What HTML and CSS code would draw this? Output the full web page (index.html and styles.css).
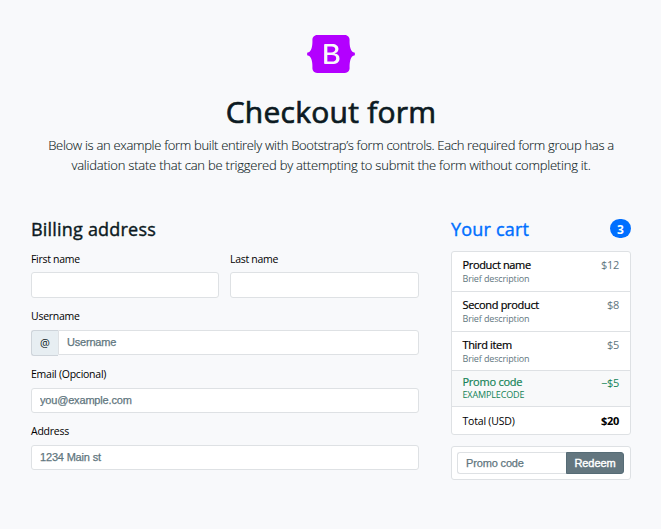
FILE: index.html
```html
<!DOCTYPE html>
<html lang="en">
<head>
<meta charset="utf-8">
<title>Checkout form</title>
<link rel="stylesheet" href="styles.css">
</head>
<body>
<div class="container">
  <header class="intro">
    <svg class="logo" viewBox="0 0 118 94" role="img" aria-label="Bootstrap"><path fill="#b300ff" fill-rule="evenodd" d="M24.509 0c-6.733 0-11.715 5.893-11.492 12.284.214 6.14-.064 14.092-2.066 20.577C8.943 39.365 5.547 43.485 0 44.014v5.972c5.547.529 8.943 4.649 10.951 11.153 2.002 6.485 2.28 14.437 2.066 20.577C12.794 88.106 17.776 94 24.51 94H93.5c6.733 0 11.714-5.893 11.491-12.284-.214-6.14.064-14.092 2.066-20.577 2.009-6.504 5.396-10.624 10.943-11.153v-5.972c-5.547-.529-8.934-4.649-10.943-11.153-2.002-6.484-2.28-14.437-2.066-20.577C105.214 5.894 100.233 0 93.5 0H24.508zM80 57.863C80 66.663 73.436 72 62.543 72H44a2 2 0 01-2-2V24a2 2 0 012-2h18.437c9.083 0 15.044 4.92 15.044 12.474 0 5.302-4.01 10.049-9.119 10.88v.277C75.317 46.394 80 51.21 80 57.863zM60.521 28.34H49.948v14.934h8.905c6.884 0 10.68-2.772 10.68-7.727 0-4.643-3.264-7.207-9.012-7.207zM49.948 49.2v16.458H60.91c7.167 0 10.964-2.876 10.964-8.281 0-5.406-3.903-8.178-11.425-8.178H49.948z"/></svg>
    <h1>Checkout form</h1>
    <p class="lead"><span class="line-a">Below is an example form built entirely with Bootstrap’s form controls. Each required form group has a</span><br><span class="line-b">validation state that can be triggered by attempting to submit the form without completing it.</span></p>
  </header>
  <main class="columns">
    <form class="billing">
      <h2>Billing address</h2>
      <div class="pair">
        <label class="field"><span class="label">First name</span><input class="control tall" type="text"></label>
        <label class="field"><span class="label">Last name</span><input class="control tall" type="text"></label>
      </div>
      <label class="field"><span class="label raised">Username</span>
        <span class="group"><span class="addon">@</span><input class="control joined" type="text" placeholder="Username"></span>
      </label>
      <label class="field email"><span class="label raised">Email (Opcional)</span><input class="control" type="email" placeholder="you@example.com"></label>
      <label class="field"><span class="label raised">Address</span><input class="control" type="text" placeholder="1234 Main st"></label>
    </form>
    <aside class="cart">
      <h2 class="cart-title"><span>Your cart</span><span class="badge">3</span></h2>
      <ul class="list">
        <li class="item"><div><h6>Product name</h6><small>Brief description</small></div><span class="price">$12</span></li>
        <li class="item"><div><h6 class="second">Second product</h6><small>Brief description</small></div><span class="price">$8</span></li>
        <li class="item third"><div><h6>Third item</h6><small>Brief description</small></div><span class="price">$5</span></li>
        <li class="item promo"><div><h6>Promo code</h6><small>EXAMPLECODE</small></div><span class="price">−$5</span></li>
        <li class="item total"><span class="sum">Total (USD)</span><strong class="price">$20</strong></li>
      </ul>
      <form class="redeem"><input class="control code" type="text" placeholder="Promo code"><button type="button">Redeem</button></form>
    </aside>
  </main>
</div>
</body>
</html>
```
FILE: styles.css
```css
* { box-sizing: border-box; }
body {
  margin: 0;
  background: #f8f9fb;
  color: #0c1a22;
  font-family: "Open Sans", "Noto Sans", sans-serif;
  font-size: 11px;
}
h1, h2, h6, p, ul { margin: 0; padding: 0; font-weight: 500; }
.container { width: 600px; margin-left: 31px; padding-top: 35px; }
.intro { height: 183px; text-align: center; }
.logo { display: block; width: 48px; height: 38px; margin: 0 auto; }
h1 {
  height: 62px;
  padding-top: 18px;
  font-size: 30px;
  line-height: 42px;
  letter-spacing: 0.25px;
  -webkit-text-stroke: 0.7px #0c1a22;
}
.lead { font-size: 13px; font-weight: 300; line-height: 20px; white-space: nowrap; -webkit-text-stroke: 0.1px #0c1a22; }
.line-a { letter-spacing: -0.31px; }
.line-b { letter-spacing: -0.22px; }
.columns { display: grid; grid-template-columns: 388px 180px; column-gap: 32px; }
h2 {
  height: 33px;
  font-size: 18px;
  line-height: 23px;
  letter-spacing: 0.2px;
  -webkit-text-stroke: 0.4px currentColor;
}
.pair { display: grid; grid-template-columns: 188px 189px; column-gap: 11px; }
.field { display: block; height: 58px; }
.label {
  display: block;
  height: 21px;
  color: #000;
  font-size: 10.5px;
  line-height: 16px;
  letter-spacing: -0.3px;
}
.raised { line-height: 14px; letter-spacing: -0.25px; }
.email { height: 57px; }
.control {
  display: block;
  width: 100%;
  height: 25px;
  padding: 0 8px 1px;
  border: 1px solid #dee1e4;
  border-radius: 3px;
  background: #fff;
  font: 11px "Liberation Sans", sans-serif;
  letter-spacing: -0.18px;
}
.tall { height: 26px; }
.control::placeholder { color: #5f767e; opacity: 1; -webkit-text-stroke: 0.25px #5f767e; }
.group { display: flex; }
.addon {
  flex: none;
  width: 27px;
  height: 26px;
  border: 1px solid #ced4da;
  border-right: 0;
  border-radius: 3px 0 0 3px;
  background: #e7eef2;
  line-height: 24px;
  text-align: center;
}
.joined { padding-left: 8px; border-radius: 0 3px 3px 0; letter-spacing: -0.2px; }
.cart-title { display: flex; justify-content: space-between; color: #006fff; }
.badge {
  width: 21px;
  height: 19px;
  margin-top: 1px;
  border-radius: 10px;
  background: #006fff;
  color: #fff;
  font-size: 12px;
  font-weight: 700;
  line-height: 21px;
  letter-spacing: 0;
  text-align: center;
  -webkit-text-stroke: 0;
}
.list { list-style: none; overflow: hidden; border: 1px solid #dee1e4; border-radius: 3px; background: #fff; }
.item {
  display: flex;
  justify-content: space-between;
  height: 40px;
  padding: 6px 11px 0 10.5px;
  border-bottom: 1px solid #dee1e4;
}
.third { height: 39px; }
h6 {
  color: #000;
  font-size: 11px;
  line-height: 14px;
  letter-spacing: -0.35px;
  -webkit-text-stroke: 0.2px currentColor;
}
.second { letter-spacing: -0.32px; }
small { display: block; color: #5f767e; font-size: 9px; line-height: 13px; letter-spacing: -0.13px; }
.price { color: #5f767e; line-height: 13px; letter-spacing: -0.3px; }
.promo { height: 36px; padding-top: 4px; background: #f8f9fa; }
.promo h6 { line-height: 14px; letter-spacing: -0.25px; }
.promo small { line-height: 12px; }
.promo .price { line-height: 15px; }
.promo h6, .promo small, .promo .price { color: #148357; }
.total { height: 27px; border-bottom: 0; }
.total .price { color: #000; line-height: 15px; }
.sum { color: #000; font-size: 10.5px; line-height: 17px; letter-spacing: -0.2px; }
.redeem {
  display: flex;
  height: 34px;
  margin-top: 11px;
  padding: 5px;
  border: 1px solid #dee1e4;
  border-radius: 3px;
  background: #fff;
}
.code { width: 109px; height: 22px; border-radius: 3px 0 0 3px; border-right: 0; letter-spacing: -0.15px; }
button {
  width: 58px;
  height: 22px;
  padding: 0 0 1px;
  border: 1px solid #566c76;
  border-radius: 0 3px 3px 0;
  background: #63767f;
  color: #fff;
  font: 11px "Liberation Sans", sans-serif;
  letter-spacing: -0.1px;
  -webkit-text-stroke: 0.4px #fff;
}
```
